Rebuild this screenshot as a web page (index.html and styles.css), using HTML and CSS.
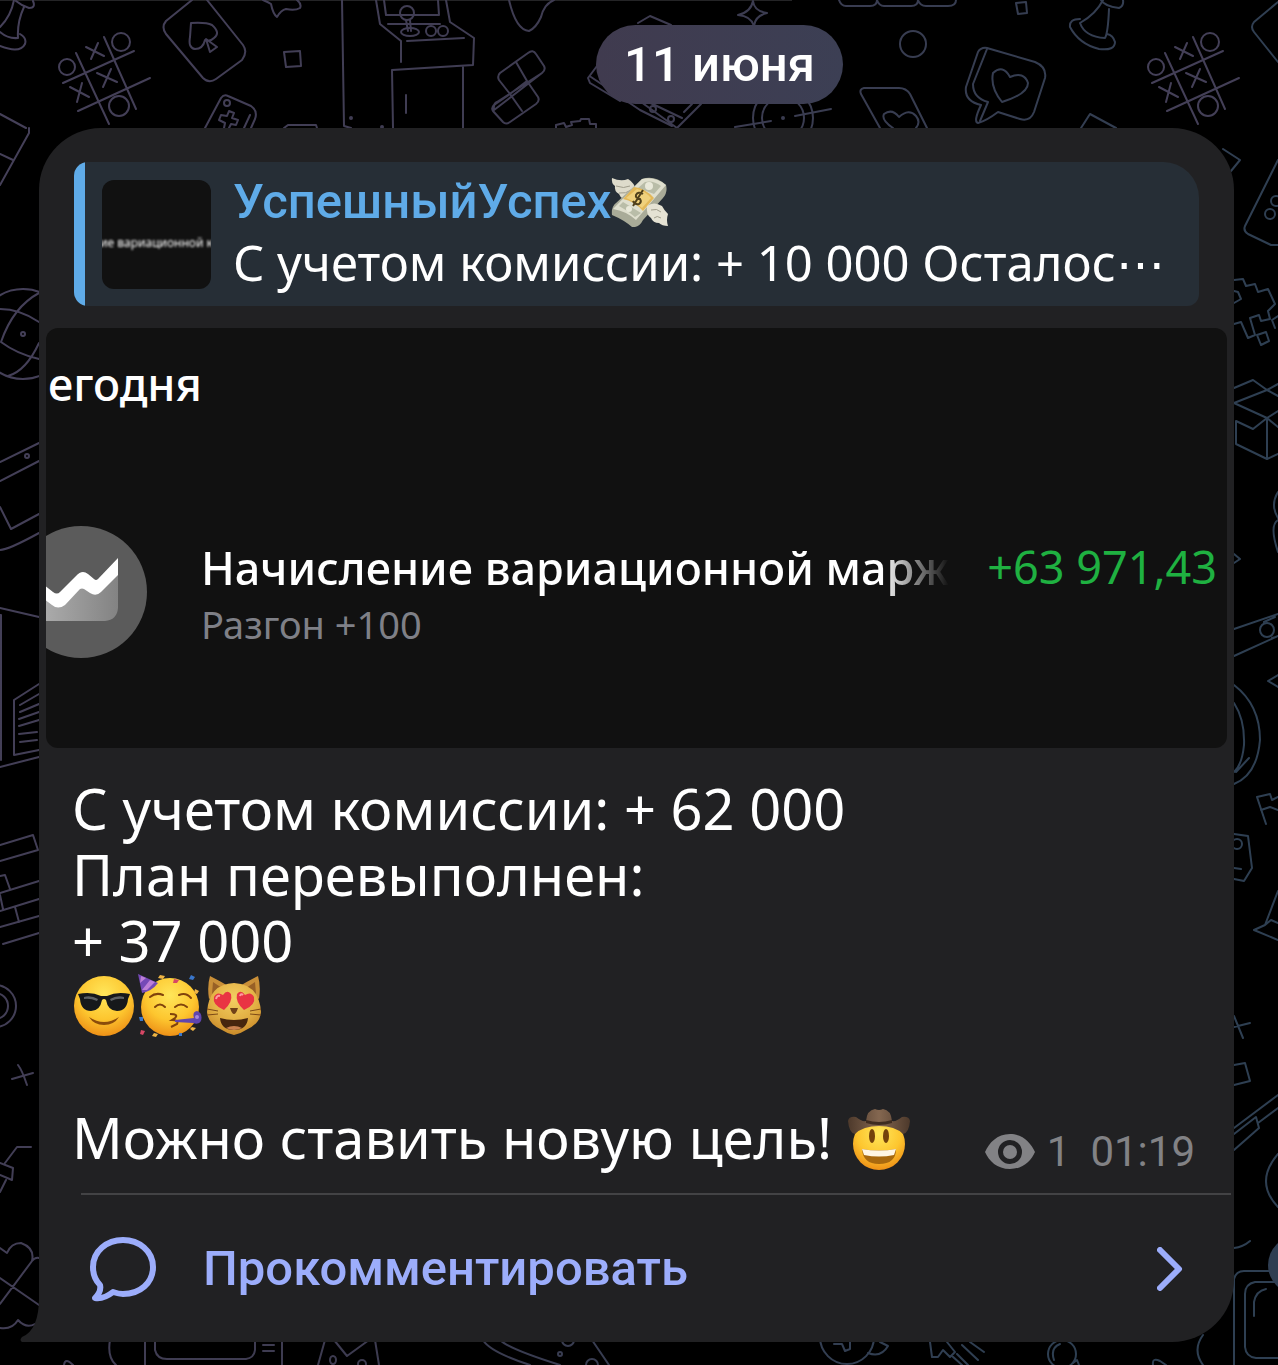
FILE: index.html
```html
<!DOCTYPE html>
<html lang="ru">
<head>
<meta charset="UTF-8">
<meta name="viewport" content="width=device-width, initial-scale=1.0">
<title>УспешныйУспех</title>
<link rel="stylesheet" href="styles.css">
</head>
<body>
<main class="chat">

    <!-- Wallpaper doodles -->
    <svg class="wallpaper" viewBox="0 0 1278 1365" preserveAspectRatio="xMidYMin slice" aria-hidden="true">
        <defs>
            <linearGradient id="ink" gradientUnits="userSpaceOnUse" x1="0" y1="0" x2="1278" y2="300">
                <stop offset="0" stop-color="#454059"/>
                <stop offset="0.5" stop-color="#3d3b50"/>
                <stop offset="1" stop-color="#2e3f52"/>
            </linearGradient>
            <g id="tictactoe">
                <path d="M76 53L109 124M104 37L136 109M63 83L134 51M78 111L150 78M86 47L104 56M98 43L91 59M97 73L117 82M111 69L103 87M70 87L89 97M82 83L77 102"/>
                <circle cx="67" cy="67" r="8"/><circle cx="121" cy="42" r="9"/><circle cx="119" cy="106" r="10"/>
            </g>
        </defs>
        <rect x="0" y="0" width="792" height="1" fill="#242426"/>
        <g fill="none" stroke="url(#ink)" stroke-width="2" stroke-linecap="round" stroke-linejoin="round">
            <use href="#tictactoe"/>
            <use href="#tictactoe" x="1089"/>
            <!-- top edge -->
            <path d="M14 0Q11 16 0 27M24 7Q17 22 18 38Q8 39 0 32M33 1Q36 8 29 8Q22 6 16 1M20 34Q27 38 25 44Q20 54 0 46M0 114L26 128"/>
            <path d="M192 0L166 21Q161 27 166 34L203 78Q209 84 216 79L242 60Q248 52 243 45L207 0M191 23Q206 22 212 25Q221 33 214 38Q210 42 205 40Q203 49 195 49Q188 48 190 37ZM206 39L210 52L217 47Z"/>
            <path d="M263 0Q268 2 271 4Q273 14 277 17Q281 10 286 9Q295 11 300 8Q302 4 297 0M284 52L300 51L301 66L286 67Z"/>
            <path d="M342 0L344 126L351 128M376 0L380 24L401 41V62M384 0L386 15H439L438 0M446 0L450 22L474 38L473 65L392 70L393 128M463 66V128M406 95V113M388 24H440M407 41L464 38M406 20L408 31M410 20L411 31"/>
            <ellipse cx="407" cy="13" rx="7" ry="7"/><ellipse cx="410" cy="32" rx="9" ry="4"/><circle cx="431" cy="31" r="5"/><circle cx="443" cy="31" r="5"/>
            <path d="M205 128L221 98Q224 94 228 96L251 106Q258 111 255 119L251 128M229 111L234 113L232 118L238 120L236 125L231 124L229 128M229 111L227 116L221 115L219 120L225 123L224 128M250 115L244 128"/>
            <circle cx="227" cy="103" r="3"/><circle cx="351" cy="118" r="1"/><circle cx="382" cy="127" r="1"/>
            <path d="M284 128L288 125H316L317 128M509 0Q516 30 529 31Q536 28 541 17Q544 4 554 0"/>
            <path d="M528 53Q533 49 536 54L544 66Q546 70 542 73L498 107L494 110Q493 104 497 102L542 73M528 53L500 73Q497 76 499 80L510 94L494 105Q491 108 493 111L503 122Q506 125 510 122L536 104Q540 101 538 97L527 81M516 62L527 81L510 94L522 111"/>
            <path d="M556 128L556 125L564 123L566 127L572 125L571 122L580 121L581 119L589 119L590 124L596 124V128"/>
            <path d="M600 62L588 78L590 83L620 101M591 77L640 110M630 94L677 128L701 104M640 98L682 118M640 110L672 126M638 23L650 16L671 25M692 104L684 112"/>
            <circle cx="653" cy="109" r="3"/><circle cx="671" cy="119" r="3"/>
            <path d="M753 1Q754 11 767 13Q755 16 754 26Q751 16 738 15Q751 12 753 1ZM839 0Q841 6 846 6H870Q877 6 877 0Q879 6 884 6H911Q918 6 918 0Q920 6 926 6H948Q956 6 956 0"/>
            <circle cx="913" cy="44" r="13"/><circle cx="783" cy="118" r="30"/><circle cx="783" cy="118" r="21"/><circle cx="783" cy="118" r="1"/>
            <path d="M735 127L771 121M795 116L831 109M880 128L861 94Q859 89 864 88H899Q906 88 910 94L927 128M893 128Q881 120 884 114Q892 108 899 117Q909 108 916 116Q921 122 916 128"/>
            <path d="M987 48L1035 62Q1047 67 1045 78L1034 112Q1030 122 1020 119L998 112Q986 121 978 123Q973 122 981 105Q964 101 966 87L978 52Q981 47 987 48M987 49L973 84Q973 98 988 102L980 121M1002 102Q990 87 993 73Q1003 64 1010 77Q1024 71 1028 83Q1028 94 1002 102Z"/>
            <path d="M1016 3L1026 2L1027 13L1018 14ZM1103 0Q1096 14 1080 23Q1085 37 1105 38Q1108 33 1109 9M1101 0Q1104 6 1119 8Q1124 6 1123 0M1080 19Q1069 19 1070 27Q1079 44 1099 49Q1115 51 1115 42Q1113 35 1107 34M1081 128L1090 114L1116 128M1278 2L1254 22Q1250 27 1254 32L1278 62"/>
            <!-- left edge -->
            <path d="M29 128V133L0 185M0 154L13 160M39 293Q13 307 1 342Q17 354 39 359M0 309Q20 309 39 322M39 343Q26 371 8 376"/>
            <circle cx="23" cy="334" r="45"/><circle cx="23" cy="334" r="2"/><circle cx="27" cy="456" r="2"/>
            <path d="M0 462L39 443M0 481L39 461M0 507L11 529L39 514M0 550Q8 550 39 533M0 608L39 617M0 615H1V760M39 684L14 700V755L39 750M20 705L39 694M20 712L39 704M19 719L39 712M19 726L39 720M19 734L37 732M20 742L37 740M0 767L39 757"/>
            <path d="M0 845L33 835L38 850L0 861M0 876L5 875L10 889M0 893L39 881M0 911L39 899M0 927L39 916M15 907L19 922M0 895L3 909M3 944L39 933M12 1079L33 1073M18 1065Q22 1070 27 1085"/>
            <circle cx="-5" cy="1006" r="21"/><circle cx="-5" cy="1006" r="13"/>
            <path d="M31 1147H17L5 1163M0 1163L13 1168L12 1180L0 1175M6 1180L0 1192M0 1248L7 1253Q11 1243 21 1243Q35 1248 32 1261L0 1304M0 1278L39 1305M32 1261Q35 1257 39 1258M0 1328Q12 1330 18 1320Q26 1329 35 1324"/>
            <!-- right edge -->
            <path d="M1223 149L1240 160L1231 171M1278 160L1245 226Q1243 231 1248 234L1271 245H1278M1234 280L1243 279L1246 286L1255 284L1258 292L1268 289L1275 304L1268 311L1270 319L1261 321L1259 315L1250 318L1255 335L1248 338L1241 322L1234 324M1257 335L1266 332L1269 341L1261 345ZM1234 291L1238 292L1241 299L1234 303M1278 316L1272 320L1275 328"/>
            <circle cx="1270" cy="214" r="5"/><circle cx="1276" cy="201" r="5"/><circle cx="1267" cy="630" r="7"/>
            <path d="M1234 388L1253 380L1267 390L1234 403L1267 418L1253 429L1236 421V444L1267 459V418M1278 384L1267 390L1278 396M1278 411L1267 418L1278 427M1267 459L1278 454M1278 492Q1270 505 1278 518M1278 520Q1269 525 1278 552M1234 554L1240 559L1234 563M1234 629L1278 614M1234 656L1278 636M1278 675L1268 681L1278 687M1264 622L1275 617M1272 638L1276 637"/>
            <path d="M1234 685Q1260 705 1260 740Q1257 775 1234 784M1234 703Q1245 720 1244 745Q1242 765 1234 772M1249 758L1236 772M1257 797L1266 824M1257 797L1270 794L1272 800L1278 797M1261 810L1270 807L1278 810M1234 834L1248 836L1252 868L1244 881L1234 879M1234 868L1241 869M1278 891L1265 925L1254 930L1278 940M1265 925L1271 920L1278 923M1234 1016L1243 1038M1234 1027L1250 1023M1234 1065L1245 1063L1250 1081L1234 1085"/>
            <ellipse cx="1237" cy="844" rx="5" ry="5"/>
            <path d="M1234 1128L1278 1095M1234 1134L1256 1117L1259 1128L1234 1150M1258 1123L1278 1108M1278 1154Q1254 1182 1278 1207M1234 1248Q1243 1247 1250 1241M1234 1365V1279Q1236 1271 1244 1271H1278M1278 1282H1255Q1245 1284 1245 1294V1347Q1246 1357 1256 1358H1278M1254 1316V1302Q1256 1291 1266 1289"/>
            <!-- bottom edge -->
            <path d="M110 1340Q107 1357 116 1365M64 1365Q65 1357 73 1365M145 1340V1365M282 1340V1365M155 1340V1350Q157 1359 167 1359H246Q254 1358 255 1350V1340M263 1345H274M263 1351H274M325 1340L318 1365M334 1340L347 1356L369 1340M375 1340L379 1365M483 1340Q490 1352 530 1365M500 1340Q509 1349 560 1365M592 1340L609 1365"/>
            <ellipse cx="333" cy="1360" rx="3" ry="4"/><ellipse cx="362" cy="1364" rx="4" ry="4"/><circle cx="568" cy="1340" r="6"/><circle cx="560" cy="1354" r="2"/><circle cx="592" cy="1365" r="6"/>
            <circle cx="847" cy="1337" r="27"/><circle cx="1062" cy="1354" r="14"/>
            <path d="M834 1344H842L845 1351L850 1349V1342M868 1353Q881 1358 888 1346L880 1342M930 1342L932 1357L938 1357L943 1350L950 1357L955 1352L947 1342M952 1356L962 1365M957 1354L968 1365M962 1345L978 1360M970 1342L984 1352M1054 1360Q1050 1348 1060 1344M1073 1363L1077 1360L1079 1365M1153 1365Q1152 1357 1160 1361L1166 1365M1203 1335Q1192 1350 1203 1365"/>
        </g>
        <circle cx="1297" cy="1265" r="29" fill="#2f3e52"/>
    </svg>

    <time class="date-pill" datetime="06-11">11 июня</time>

    <article class="bubble">
        <a class="quote" href="#reply">
            <span class="quote-thumb"><span>ие вариационной к</span></span>
            <span class="quote-body">
                <span class="quote-name">УспешныйУспех<svg class="money" viewBox="0 0 58 50" role="img" aria-label="деньги с крыльями">
                    <path d="M1 1Q10 5 17 2Q24 6 25 14L20 24Q10 23 8 17Q3 14 4 9Q0 6 1 1Z" fill="#dedbcb"/>
                    <path d="M5 9Q13 12 19 9M8 16Q15 17 20 13" stroke="#a09d8c" fill="none"/>
                    <path d="M31 2Q44 -2 55 8Q57 15 52 21L32 43Q28 51 21 50Q13 43 1 38Q0 30 5 26Z" fill="#a9ab98"/>
                    <path d="M31 2Q44 -1 55 8L25 43Q15 34 2 32Z" fill="#dfdfce"/>
                    <path d="M34 5Q42 3 50 9L43 17L27 11ZM8 29L12 25L30 36L24 40Q16 33 8 29Z" fill="#b9bda8"/>
                    <circle cx="38" cy="9" r="4" fill="#e9e9da"/><circle cx="18" cy="32" r="3" fill="#e9e9da"/>
                    <path d="M23 10Q34 11 43 21L32 34Q23 24 12 22Z" fill="#e3b858"/>
                    <path d="M26 12Q34 14 40 21L31 31Q23 24 15 21Z" fill="#f0d17c"/>
                    <path d="M32 17Q27 14 25 18Q24 21 29 22Q31 25 28 27Q24 28 22 24M32 13L22 29" fill="none" stroke="#50411c" stroke-width="2"/>
                    <path d="M36 29Q43 24 51 29Q53 33 57 37Q55 43 57 49Q51 49 48 46Q42 46 40 41Q35 38 36 29Z" fill="#e5e2d3"/>
                    <path d="M40 33Q46 31 50 35M43 41Q46 38 50 41" stroke="#a09d8c" fill="none"/>
                </svg></span>
                <span class="quote-text">С учетом комиссии: + 10 000 Осталос⋯</span>
            </span>
        </a>

        <section class="photo">
            <h2 class="photo-day">егодня</h2>
            <div class="operation">
                <svg class="operation-icon" viewBox="31 0 101 132" aria-hidden="true">
                    <defs>
                        <linearGradient id="area" x1="0" y1="0" x2="1" y2="0">
                            <stop offset="0" stop-color="#b0b0b0"/><stop offset="1" stop-color="#838383"/>
                        </linearGradient>
                    </defs>
                    <circle cx="66" cy="66" r="66" fill="#5b5b5b"/>
                    <path d="M20 66L43 78L68 53L81 62L103 44V82Q102 94 90 95H20Z" fill="url(#area)"/>
                    <path d="M103 32V49L86 66Q81 71 75 67L69 63Q67 62 65 63L50 79Q43 84 37 79L20 66V52L38 66Q42 69 45 66L61 50Q67 43 73 48L79 53Q81 55 83 53Z" fill="#fff"/>
                </svg>
                <div class="operation-info">
                    <span class="operation-title">Начисление вариационной марж</span>
                    <span class="operation-sub">Разгон +100</span>
                </div>
                <span class="operation-sum">+63 971,43</span>
            </div>
        </section>

        <div class="message">
            <p>С учетом комиссии: + 62 000<br>План перевыполнен:<br>+ 37 000</p>
            <p class="emoji-line">
                <svg class="emoji" viewBox="0 0 64 64" role="img" aria-label="лицо в очках">
                    <defs>
                        <radialGradient id="face" cx="0.5" cy="0.3" r="0.7">
                            <stop offset="0" stop-color="#ffe65a"/><stop offset="0.6" stop-color="#fdc62f"/><stop offset="1" stop-color="#ee9117"/>
                        </radialGradient>
                        <radialGradient id="fur" cx="0.5" cy="0.3" r="0.7">
                            <stop offset="0" stop-color="#f3cf62"/><stop offset="0.6" stop-color="#e2b044"/><stop offset="1" stop-color="#c98a2a"/>
                        </radialGradient>
                    </defs>
                    <circle cx="32" cy="32" r="30" fill="url(#face)"/>
                    <path d="M17 43Q32 53 47 43Q42 51 32 51Q22 51 17 43Z" fill="#8b4c0b"/>
                    <path d="M6 20Q19 17 29 22H35Q45 17 58 20L56 25Q55 37 45 37Q36 37 34 26Q32 24 30 26Q28 37 19 37Q9 37 8 25Z" fill="#16181b"/>
                    <path d="M12 23Q19 21 26 25L25 27Q18 24 12 25ZM38 25Q45 21 52 23V25Q45 24 39 27Z" fill="#5d6165"/>
                </svg>
                <svg class="emoji" viewBox="0 0 64 64" role="img" aria-label="лицо на празднике">
                    <circle cx="32" cy="33" r="29" fill="url(#face)"/>
                    <path d="M0 0L20 9Q14 17 4 19Z" fill="#7549b7"/>
                    <path d="M3 2L2 9L8 4ZM12 6L4 16L9 16L17 8Z" fill="#be7fd8"/>
                    <path d="M12 23Q18 18 25 21M41 21Q48 18 53 24M17 33Q22 28 27 33M37 33Q43 28 49 33" fill="none" stroke="#81430c" stroke-width="2" stroke-linecap="round"/>
                    <path d="M32 40Q41 40 37 44L34 46Q41 46 39 50L33 53" fill="none" stroke="#81430c" stroke-width="2"/>
                    <path d="M37 46L56 44Q54 38 59 37Q65 39 63 47Q61 51 55 49L37 48Z" fill="#6045ae"/>
                    <circle cx="59" cy="43" r="2" fill="#a687db"/>
                    <path d="M22 1L27 2L25 5L20 4ZM57 15L61 17L59 20L56 19ZM54 53L58 54L55 57L52 55ZM16 59L20 60L18 63L14 62Z" fill="#eeb444"/>
                    <path d="M53 1L57 3L55 6L51 5ZM1 43H5V47H2ZM41 59H44V62H41Z" fill="#3976cb"/>
                    <path d="M36 5L41 6L39 9L35 9ZM3 56L7 57L5 61L2 60Z" fill="#d74765"/>
                </svg>
                <svg class="emoji" viewBox="2 0 64 64" role="img" aria-label="влюблённый кот">
                    <path d="M8 2Q5 12 7 25L28 13Q18 7 8 2ZM56 2Q59 12 57 25L36 13Q46 7 56 2Z" fill="#c98f38"/>
                    <path d="M11 8L10 20L20 14ZM53 8L54 20L44 14Z" fill="#986026"/>
                    <path d="M32 9Q57 10 59 38Q58 50 44 56Q38 60 32 61Q26 60 20 56Q6 50 5 38Q7 10 32 9Z" fill="url(#fur)"/>
                    <path d="M18 44Q32 48 46 44Q45 56 32 56Q19 56 18 44Z" fill="#47260e"/>
                    <path d="M24 54Q32 50 40 54Q32 58 24 54Z" fill="#c9814f"/>
                    <path d="M28 34H36Q34 40 32 40Q30 40 28 34Z" fill="#704118"/>
                    <path d="M22 36Q10 31 12 23Q15 17 21 21Q25 15 29 20Q31 28 22 36ZM42 36Q33 28 35 20Q39 15 43 21Q49 17 52 23Q54 31 42 36Z" fill="#e93443"/>
                    <path d="M14 25Q15 21 18 22M38 22Q39 19 41 21" stroke="#ff9ba0" stroke-width="2" fill="none"/>
                    <path d="M5 35L16 37M5 41L16 40M59 35L48 37M59 41L48 40" stroke="#7c4917" stroke-width="1"/>
                </svg>
            </p>
            <div class="last-line">
                <p>Можно ставить новую цель! <svg class="emoji" viewBox="0 0 64 64" role="img" aria-label="ковбой">
                    <defs>
                        <linearGradient id="hat" x1="0" y1="0" x2="1" y2="0">
                            <stop offset="0" stop-color="#4d392b"/><stop offset="0.5" stop-color="#846750"/><stop offset="1" stop-color="#4d392b"/>
                        </linearGradient>
                    </defs>
                    <circle cx="32" cy="37" r="26" fill="url(#face)"/>
                    <path d="M15 42Q32 45 49 42Q49 57 32 57Q16 57 15 42Z" fill="#a8690f"/>
                    <path d="M15 42Q32 45 49 42L47 48Q32 51 17 48Z" fill="#fff6e4"/>
                    <ellipse cx="25" cy="29" rx="3" ry="7" fill="#74430c"/><ellipse cx="39" cy="29" rx="3" ry="7" fill="#74430c"/>
                    <path d="M1 14Q2 9 9 10Q15 15 19 14Q20 3 28 2Q32 4 36 2Q44 3 45 14Q49 15 55 10Q62 9 63 14Q62 26 56 27Q48 19 32 19Q16 19 8 27Q2 26 1 14Z" fill="url(#hat)"/>
                    <path d="M19 13Q32 17 45 13V16Q32 20 19 16Z" fill="#3e2c20"/>
                </svg></p>
                <div class="meta">
                    <svg class="eye" viewBox="0 0 50 36" aria-hidden="true">
                        <path fill="#828285" fill-rule="evenodd" d="M25 0C38 0 46 9 50 18C46 27 38 35 25 35C12 35 4 27 0 18C4 9 12 0 25 0ZM25 6A12 12 0 1 0 25 30A12 12 0 1 0 25 6Z"/>
                        <circle cx="25" cy="18" r="7" fill="#828285"/>
                    </svg>
                    <span class="views">1</span>
                    <time datetime="01:19">01:19</time>
                </div>
            </div>
        </div>

        <button class="comment" type="button">
            <svg class="comment-icon" viewBox="0 0 68 66" aria-hidden="true">
                <path d="M34 4C50 4 64 15 64 31C64 47 51 58 34 58C30 58 27 57 24 56C19 60 13 63 6 62C10 58 12 53 11 49C6 44 4 38 4 31C4 15 18 4 34 4Z" fill="none" stroke="#9cadfb" stroke-width="6" stroke-linejoin="round"/>
            </svg>
            <span>Прокомментировать</span>
            <svg class="chevron" viewBox="0 0 26 44" aria-hidden="true">
                <path d="M3 3L22 22L3 41" fill="none" stroke="#9cadfb" stroke-width="6" stroke-linecap="round" stroke-linejoin="round"/>
            </svg>
        </button>

        <svg class="tail" viewBox="0 0 40 44" aria-hidden="true">
            <path d="M19 0Q19 32 2 39Q-1 42 2 44H40V0Z" fill="#212123"/>
        </svg>
    </article>
</main>
</body>
</html>
```
FILE: styles.css
```css
* {
    box-sizing: border-box;
}

body {
    margin: 0;
    background-color: #000;
    color: #fff;
    font-family: "Noto Sans", "Open Sans", sans-serif;
}

.chat {
    position: relative;
    display: flex;
    flex-direction: column;
    min-height: 100vh;
    padding: 25px 44px 23px 39px;
    overflow: hidden;
}

.wallpaper {
    position: absolute;
    top: 0;
    left: 0;
    width: 100%;
    height: 100%;
}

.date-pill {
    position: relative;
    align-self: center;
    margin: 0 0 24px 166px;
    padding: 0 28px;
    border-radius: 40px;
    background: linear-gradient(90deg, #403b4f, #3c3f54);
    font-family: Roboto, sans-serif;
    font-size: 49px;
    font-weight: 500;
    line-height: 79px;
}

.bubble {
    position: relative;
    padding-top: 34px;
    border-radius: 62px 62px 62px 0;
    background-color: #212123;
}

/* Reply */
.quote {
    display: flex;
    gap: 22px;
    margin: 0 35px 22px;
    padding: 12px 28px;
    border-radius: 14px 36px 12px 14px;
    background: linear-gradient(90deg, #5fabe8 11px, #262e36 11px);
    color: #fff;
    text-decoration: none;
}

.quote-thumb {
    display: flex;
    flex: none;
    align-items: center;
    justify-content: center;
    width: 109px;
    height: 109px;
    margin-top: 6px;
    border-radius: 12px;
    background-color: #111;
    overflow: hidden;
    font-size: 12px;
    white-space: nowrap;
}

.quote-thumb span {
    margin-top: 16px;
    filter: blur(1px);
}

.quote-body {
    display: flex;
    flex-direction: column;
    min-width: 0;
}

.quote-name {
    display: flex;
    align-items: center;
    color: #5fabe8;
    font-family: Roboto, sans-serif;
    font-size: 49px;
    font-weight: 500;
    line-height: 56px;
}

.money {
    width: 58px;
    height: 50px;
}

.quote-text {
    overflow: hidden;
    font-size: 49px;
    line-height: 64px;
    white-space: nowrap;
}

/* Attached picture */
.photo {
    margin: 0 7px;
    padding-bottom: 90px;
    border-radius: 12px;
    background-color: #111;
    overflow: hidden;
}

.photo-day {
    margin: 0;
    padding: 26px 2px 112px;
    font-size: 45px;
    font-weight: 500;
    line-height: 60px;
}

.operation {
    display: flex;
    align-items: center;
    padding-right: 10px;
    font-size: 45px;
    white-space: nowrap;
}

.operation-icon {
    flex: none;
    width: 101px;
    height: 132px;
}

.operation-info {
    display: flex;
    flex: 1;
    flex-direction: column;
    min-width: 0;
    margin: 0 28px 0 54px;
    padding-top: 4px;
}

.operation-title {
    align-self: flex-start;
    max-width: 100%;
    overflow: hidden;
    font-weight: 500;
    line-height: 60px;
    -webkit-mask-image: linear-gradient(90deg, #000 91%, transparent);
    mask-image: linear-gradient(90deg, #000 91%, transparent);
}

.operation-sub {
    color: #7f8087;
    font-size: 38px;
    line-height: 52px;
}

.operation-sum {
    align-self: flex-start;
    color: #1fb141;
    line-height: 82px;
}

/* Message text */
.message {
    padding: 27px 39px 22px 33px;
    font-size: 56px;
    line-height: 66px;
}

.message p {
    margin: 0;
}

.emoji {
    width: 64px;
    height: 64px;
    vertical-align: -12px;
}

.message .emoji-line {
    display: flex;
    align-items: center;
    gap: 2px;
    height: 66px;
    margin-bottom: 66px;
}

.last-line {
    display: flex;
    align-items: flex-end;
    justify-content: space-between;
    height: 66px;
}

.meta {
    display: flex;
    align-items: center;
    gap: 12px;
    color: #828285;
    font-family: Roboto, sans-serif;
    font-size: 42px;
    line-height: 38px;
}

.eye {
    width: 50px;
    height: 36px;
}

.views {
    margin-right: 8px;
}

/* Comment button */
.comment {
    display: flex;
    align-items: center;
    width: calc(100% - 45px);
    margin: 0 3px 0 42px;
    padding: 0 48px 0 8px;
    border: none;
    border-top: 2px solid #434345;
    background: none;
    color: #9cadfb;
    font-family: Roboto, sans-serif;
    font-size: 49px;
    font-weight: 500;
    line-height: 147px;
    text-align: left;
    cursor: pointer;
}

.comment span {
    flex: 1;
}

.comment-icon {
    width: 68px;
    height: 66px;
    margin-right: 46px;
}

.chevron {
    width: 26px;
    height: 44px;
}

.tail {
    position: absolute;
    bottom: 0;
    left: -19px;
    width: 40px;
    height: 44px;
}
```
